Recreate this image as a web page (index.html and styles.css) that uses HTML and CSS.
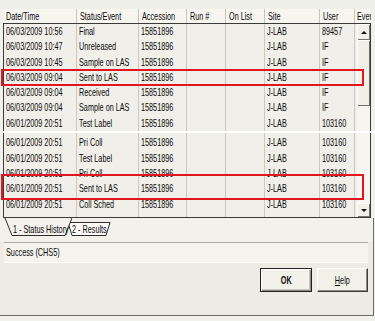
FILE: index.html
```html
<!DOCTYPE html>
<html lang="en">
<head>
<meta charset="utf-8">
<title>Status History</title>
<link rel="stylesheet" href="styles.css">
</head>
<body>
<div class="dialog">
  <div class="top-strip"></div>
  <div class="list">
    <div class="header">
      <div class="hcell"><span class="t">Date/Time</span></div>
      <div class="hcell"><span class="t">Status/Event</span></div>
      <div class="hcell"><span class="t">Accession</span></div>
      <div class="hcell"><span class="t">Run #</span></div>
      <div class="hcell"><span class="t">On List</span></div>
      <div class="hcell"><span class="t">Site</span></div>
      <div class="hcell"><span class="t">User</span></div>
      <div class="hcell last"><span class="t">Ever</span></div>
    </div>
    <div class="body">
      <div class="rows">
        <div class="row"><div class="c"><span class="t">06/03/2009 10:56</span></div><div class="c"><span class="t">Final</span></div><div class="c"><span class="t">15851896</span></div><div class="c"></div><div class="c"></div><div class="c"><span class="t">J-LAB</span></div><div class="c"><span class="t">89457</span></div><div class="c last"></div></div>
        <div class="row"><div class="c"><span class="t">06/03/2009 10:47</span></div><div class="c"><span class="t">Unreleased</span></div><div class="c"><span class="t">15851896</span></div><div class="c"></div><div class="c"></div><div class="c"><span class="t">J-LAB</span></div><div class="c"><span class="t">IF</span></div><div class="c last"></div></div>
        <div class="row"><div class="c"><span class="t">06/03/2009 10:45</span></div><div class="c"><span class="t">Sample on LAS</span></div><div class="c"><span class="t">15851896</span></div><div class="c"></div><div class="c"></div><div class="c"><span class="t">J-LAB</span></div><div class="c"><span class="t">IF</span></div><div class="c last"></div></div>
        <div class="row"><div class="c"><span class="t">06/03/2009 09:04</span></div><div class="c"><span class="t">Sent to LAS</span></div><div class="c"><span class="t">15851896</span></div><div class="c"></div><div class="c"></div><div class="c"><span class="t">J-LAB</span></div><div class="c"><span class="t">IF</span></div><div class="c last"></div></div>
        <div class="row"><div class="c"><span class="t">06/03/2009 09:04</span></div><div class="c"><span class="t">Received</span></div><div class="c"><span class="t">15851896</span></div><div class="c"></div><div class="c"></div><div class="c"><span class="t">J-LAB</span></div><div class="c"><span class="t">IF</span></div><div class="c last"></div></div>
        <div class="row"><div class="c"><span class="t">06/03/2009 09:04</span></div><div class="c"><span class="t">Sample on LAS</span></div><div class="c"><span class="t">15851896</span></div><div class="c"></div><div class="c"></div><div class="c"><span class="t">J-LAB</span></div><div class="c"><span class="t">IF</span></div><div class="c last"></div></div>
        <div class="row"><div class="c"><span class="t">06/01/2009 20:51</span></div><div class="c"><span class="t">Test Label</span></div><div class="c"><span class="t">15851896</span></div><div class="c"></div><div class="c"></div><div class="c"><span class="t">J-LAB</span></div><div class="c"><span class="t">103160</span></div><div class="c last"></div></div>
        <div class="row spacer"><div class="c"></div><div class="c"></div><div class="c"></div><div class="c"></div><div class="c"></div><div class="c"></div><div class="c"></div><div class="c last"></div></div>
        <div class="row"><div class="c"><span class="t">06/01/2009 20:51</span></div><div class="c"><span class="t">Pri Coll</span></div><div class="c"><span class="t">15851896</span></div><div class="c"></div><div class="c"></div><div class="c"><span class="t">J-LAB</span></div><div class="c"><span class="t">103160</span></div><div class="c last"></div></div>
        <div class="row"><div class="c"><span class="t">06/01/2009 20:51</span></div><div class="c"><span class="t">Test Label</span></div><div class="c"><span class="t">15851896</span></div><div class="c"></div><div class="c"></div><div class="c"><span class="t">J-LAB</span></div><div class="c"><span class="t">103160</span></div><div class="c last"></div></div>
        <div class="row"><div class="c"><span class="t">06/01/2009 20:51</span></div><div class="c"><span class="t">Pri Coll</span></div><div class="c"><span class="t">15851896</span></div><div class="c"></div><div class="c"></div><div class="c"><span class="t">J-LAB</span></div><div class="c"><span class="t">103160</span></div><div class="c last"></div></div>
        <div class="row"><div class="c"><span class="t">06/01/2009 20:51</span></div><div class="c"><span class="t">Sent to LAS</span></div><div class="c"><span class="t">15851896</span></div><div class="c"></div><div class="c"></div><div class="c"><span class="t">J-LAB</span></div><div class="c"><span class="t">103160</span></div><div class="c last"></div></div>
        <div class="row"><div class="c"><span class="t">06/01/2009 20:51</span></div><div class="c"><span class="t">Coll Sched</span></div><div class="c"><span class="t">15851896</span></div><div class="c"></div><div class="c"></div><div class="c"><span class="t">J-LAB</span></div><div class="c"><span class="t">103160</span></div><div class="c last"></div></div>
        <div class="row filler"><div class="c"></div><div class="c"></div><div class="c"></div><div class="c"></div><div class="c"></div><div class="c"></div><div class="c"></div><div class="c last"></div></div>
      </div>
      <div class="scrollbar">
        <div class="sb-btn"><span class="arrow-up"></span></div>
        <div class="sb-thumb"></div>
        <div class="sb-track"></div>
        <div class="sb-btn down"><span class="arrow-down"></span></div>
      </div>
    </div>
  </div>
  <div class="footer">
    <div class="tabs">
      <div class="tab tab-active">
        <svg class="tab-shape" width="68" height="18" viewBox="0 0 68 18"><polygon points="1,0 8,17.5 61,17.5 68,0" fill="#f2f1ec"/><polyline points="1,0 8,17.5 61,17.5 68,0" fill="none" stroke="#2e2e2e" stroke-width="1"/></svg>
        <span class="tab-label"><span class="t">1 - Status History</span></span>
      </div>
      <div class="tab tab-other">
        <svg class="tab-shape" width="46" height="18" viewBox="0 0 46 18"><polygon points="2,4.5 6,17.5 40,17.5 44,4.5" fill="#fbfbf8" stroke="#2e2e2e" stroke-width="1"/></svg>
        <span class="tab-label"><span class="t">2 - Results</span></span>
      </div>
    </div>
    <div class="status"><span class="t">Success (CHS5)</span></div>
    <div class="buttons">
      <button class="btn btn-ok" type="button"><span class="t tc">OK</span></button>
      <button class="btn btn-help" type="button"><span class="t tc"><u>H</u>elp</span></button>
    </div>
  </div>
  <div class="stitch"></div>
  <div class="mark mark-1"></div>
  <div class="mark mark-2"></div>
</div>
</body>
</html>
```
FILE: styles.css
```css
html, body {
  margin: 0;
  padding: 0;
}
body {
  width: 375px;
  height: 321px;
  overflow: hidden;
  background: #f2f2ee;
  font-family: "Liberation Sans", Arial, sans-serif;
  font-size: 11px;
  color: #0a0a0a;
}
.dialog {
  position: relative;
  width: 375px;
  height: 321px;
  overflow: hidden;
  background: #f1f1ec;
}
.t {
  display: inline-block;
  white-space: nowrap;
  transform: scaleX(0.66);
  transform-origin: 0 50%;
}
.tc {
  transform-origin: 50% 50%;
}
.top-strip {
  height: 9px;
  background: #efefea;
}
.list {
  margin-left: 3px;
  width: 368px;
}
.header {
  display: grid;
  grid-template-columns: 74px 62px 48px 39px 39px 55px 35px 16px;
  height: 14px;
  background: #f6f5f0;
}
.hcell {
  box-sizing: border-box;
  border-right: 1px solid #c6c5bd;
  padding-left: 3px;
  line-height: 14px;
  overflow: hidden;
}
.hcell.last {
  border-right: 0;
  padding-left: 2px;
}
.body {
  display: flex;
  height: 193px;
  border: 1px solid #3a3a3a;
  background: #f0efe9;
}
.rows {
  display: flex;
  flex-direction: column;
  width: 353px;
}
.row {
  display: grid;
  grid-template-columns: 73px 62px 48px 39px 39px 55px 35px 2px;
  height: 15.3px;
  line-height: 15.3px;
  flex: none;
}
.row.spacer {
  height: 4.25px;
}
.row.filler {
  flex: 1;
  height: auto;
}
.c {
  box-sizing: border-box;
  border-right: 1px solid #cbcac2;
  padding-left: 2px;
  overflow: hidden;
}
.c.last {
  border-right: 0;
  padding-left: 0;
}
.scrollbar {
  display: flex;
  flex-direction: column;
  width: 13px;
  background: #f6f5f1;
}
.sb-btn {
  box-sizing: border-box;
  height: 16px;
  display: flex;
  align-items: center;
  justify-content: center;
  background: #f0efe8;
  box-shadow: inset 1px 1px 0 #ffffff, inset -1px -1px 0 #75746d;
}
.sb-btn.down {
  height: 14px;
}
.arrow-up {
  width: 0;
  height: 0;
  border-left: 3px solid transparent;
  border-right: 3px solid transparent;
  border-bottom: 3px solid #111;
}
.arrow-down {
  width: 0;
  height: 0;
  border-left: 3px solid transparent;
  border-right: 3px solid transparent;
  border-top: 3px solid #111;
}
.sb-thumb {
  height: 66px;
  background: #f0efe8;
  box-shadow: inset 1px 1px 0 #ffffff, inset -1px -1px 0 #6f6e68;
}
.sb-track {
  flex: 1;
}
.footer {
  width: 373px;
  height: 97px;
  border-right: 1px solid #6c6b65;
  border-bottom: 1px solid #6c6b65;
  background: #edebe3;
}
.tabs {
  display: flex;
  height: 24px;
  padding-left: 4px;
  background: #f2f1eb;
}
.tab {
  display: grid;
  height: 18px;
}
.tab > * {
  grid-area: 1 / 1;
}
.tab-active {
  position: relative;
  z-index: 1;
  width: 68px;
}
.tab-other {
  width: 46px;
  margin-left: -6px;
}
.tab-shape {
  display: block;
}
.tab-label {
  padding-top: 4px;
  line-height: 14px;
}
.tab-active .tab-label {
  padding-left: 9px;
}
.tab-other .tab-label {
  padding-left: 6px;
}
.status {
  box-sizing: border-box;
  margin-left: 4px;
  width: 364px;
  height: 21px;
  border-top: 1px solid #aaa9a1;
  border-bottom: 1px solid #fdfdfb;
  background: #f4f3ee;
  padding-left: 2px;
  line-height: 19px;
}
.buttons {
  display: flex;
  justify-content: flex-end;
  gap: 5px;
  margin-top: 5px;
  padding-right: 5px;
}
.btn {
  box-sizing: border-box;
  height: 24px;
  margin: 0;
  padding: 0;
  display: flex;
  align-items: center;
  justify-content: center;
  background: #f1f0e9;
  font-family: "Liberation Sans", Arial, sans-serif;
  font-size: 11px;
  color: #0a0a0a;
}
.btn-ok {
  width: 52px;
  border: 1px solid #1f1f1f;
  box-shadow: inset 1px 1px 0 #ffffff, inset -1px -1px 0 #8a8982, inset -2px -2px 0 #cac9c1;
  font-weight: bold;
}
.btn-help {
  width: 51px;
  border: 1px solid;
  border-color: #ffffff #3c3c3c #3c3c3c #ffffff;
  box-shadow: inset -1px -1px 0 #8a8982;
}
.stitch {
  position: absolute;
  left: 3px;
  right: 0;
  top: 131px;
  height: 2px;
  background: #ffffff;
}
.mark {
  position: absolute;
  left: 1px;
  width: 363px;
  box-sizing: border-box;
  border: 2px solid #e3161f;
}
.mark-1 {
  top: 69px;
  height: 17px;
}
.mark-2 {
  top: 174px;
  height: 26px;
}
```
